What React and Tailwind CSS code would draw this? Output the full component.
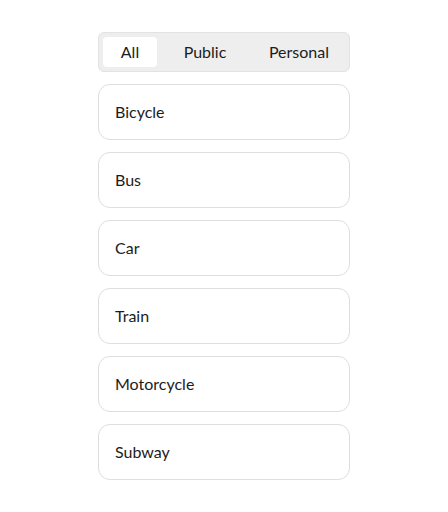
import { useState } from 'react';

const MODOS = [
  { nombre: 'Bicycle',    tipo: 'personal' },
  { nombre: 'Bus',        tipo: 'public'   },
  { nombre: 'Car',        tipo: 'personal' },
  { nombre: 'Train',      tipo: 'public'   },
  { nombre: 'Motorcycle', tipo: 'personal' },
  { nombre: 'Subway',     tipo: 'public'   },
];

const TABS = [
  { value: 'all',      label: 'All'      },
  { value: 'public',   label: 'Public'   },
  { value: 'personal', label: 'Personal' },
];

export default function App() {
  const [tab] = useState('all');

  return (
    <div className="min-h-[512px] bg-white flex justify-center pt-8 text-[#1c1c1c]" style={{ fontFamily: 'Lato, "Open Sans", sans-serif' }}>
      <div className="w-[252px] flex flex-col gap-3">
        {/* Tabs */}
        <div className="h-10 flex items-center justify-between p-1 bg-[#eeeeee] border border-[#e2e2e2] rounded-md">
          {TABS.map(t => (
            <button
              key={t.value}
              className={`h-[30px] min-w-[54px] px-4 pb-px rounded text-base ${tab === t.value ? 'bg-white' : ''}`}
            >
              {t.label}
            </button>
          ))}
        </div>

        {/* Lista */}
        {MODOS.map(m => (
          <div key={m.nombre} className="h-14 flex items-center px-4 pb-px border border-[#dedede] rounded-xl bg-white text-base">
            {m.nombre}
          </div>
        ))}
      </div>
    </div>
  );
}
